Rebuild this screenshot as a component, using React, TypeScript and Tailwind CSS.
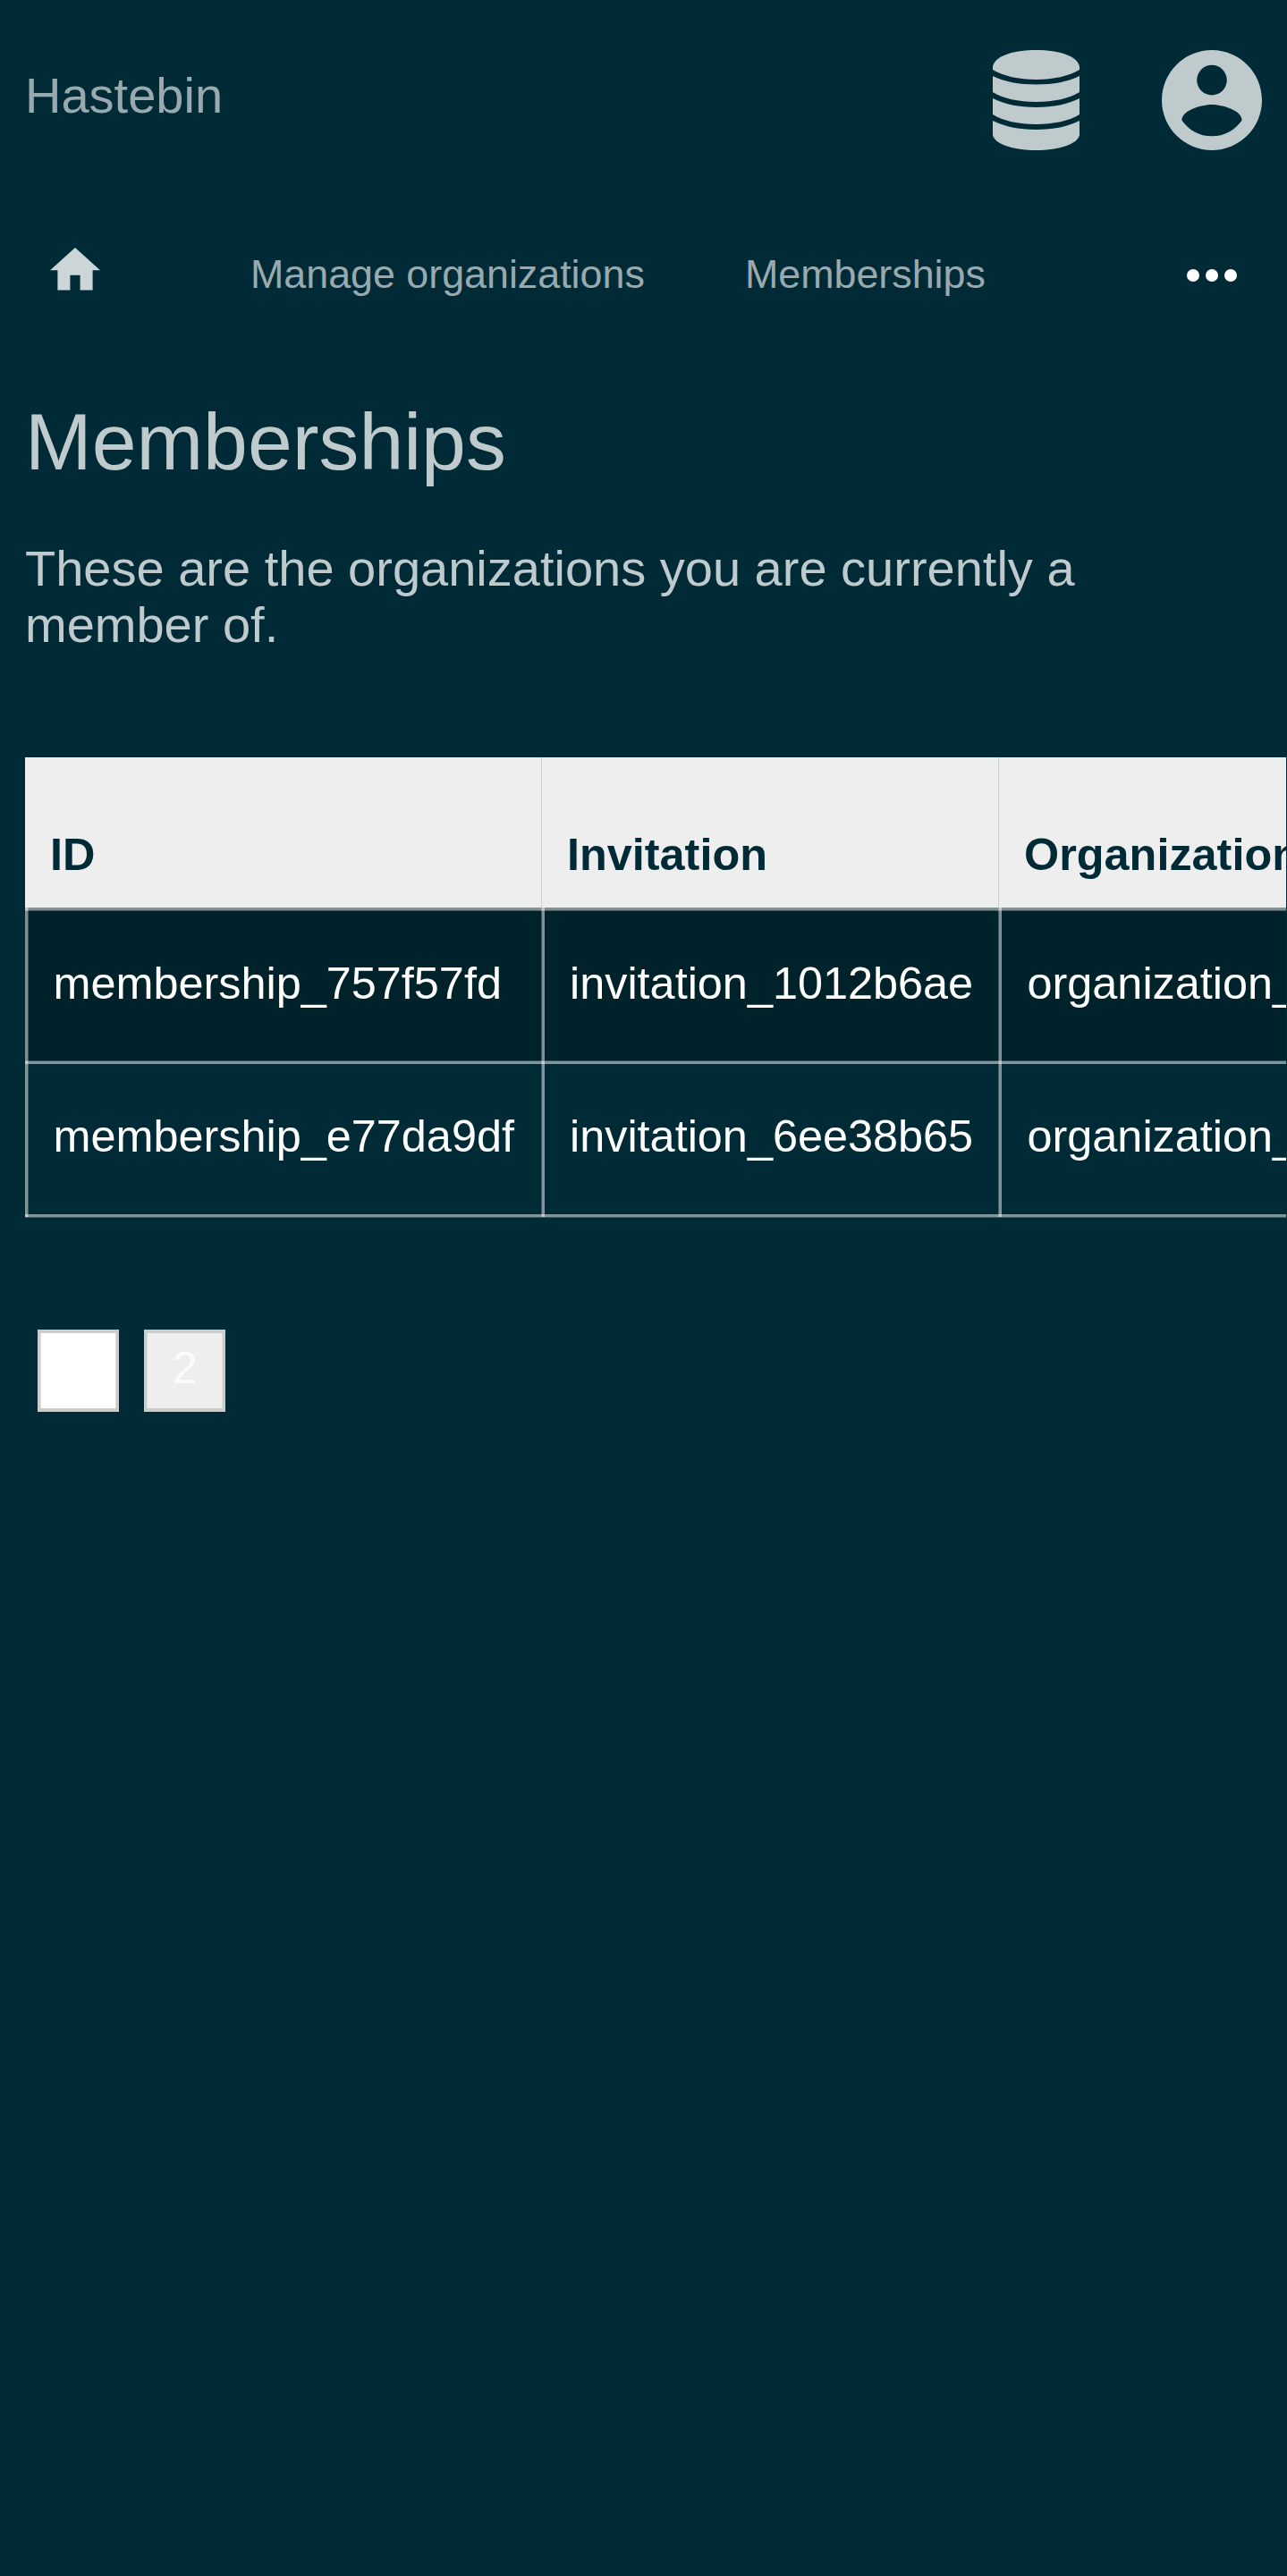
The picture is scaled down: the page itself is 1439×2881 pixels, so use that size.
const inset = {
  firstRow:
    "shadow-[inset_0_3px_rgba(255,255,255,.333),inset_0_4px_rgba(255,255,255,.25),inset_0_-1px_rgba(255,255,255,.25)]",
  lastRow:
    "shadow-[inset_0_3px_rgba(255,255,255,.5),inset_0_-3px_rgba(255,255,255,.5),0_1px_rgba(255,255,255,.25)]",
};

const rows = [
  ["membership_757f57fd", "invitation_1012b6ae", "organization_1b7c"],
  ["membership_e77da9df", "invitation_6ee38b65", "organization_1b7c"],
];

function DatabaseIcon() {
  return (
    <svg viewBox="0 0 97 112" className="h-[112px] w-[97px] fill-[#bfcacd]">
      <path d="M0 18.500C2 7 22 0 48.500 0S95 7 97 18.500V22C85 29 68 33 48.500 33S12 29 0 22Z" />
      <path d="M0 29C13 35.500 29 38.500 48.500 38.500S84 35.500 97 29V47C86 54 68 58 48.500 58S11 54 0 47Z" />
      <path d="M0 54C13 60.500 29 64 48.500 64S84 60.500 97 54V72C86 79 68 83 48.500 83S11 79 0 72Z" />
      <path d="M0 79C13 85.500 29 89 48.500 89S84 85.500 97 79V95C95 105 75 112 48.500 112S2 105 0 95Z" />
    </svg>
  );
}

function AccountIcon() {
  return (
    <svg viewBox="2 2 20 20" className="h-[112px] w-[112px] fill-[#bfcacd]">
      <path d="M12 19.2c-2.5 0-4.71-1.28-6-3.2.03-2 4-3.1 6-3.1s5.97 1.1 6 3.1c-1.29 1.92-3.5 3.2-6 3.2M12 5a3 3 0 0 1 3 3 3 3 0 0 1-3 3 3 3 0 0 1-3-3 3 3 0 0 1 3-3m0-3A10 10 0 0 0 2 12a10 10 0 0 0 10 10 10 10 0 0 0 10-10c0-5.53-4.5-10-10-10z" />
    </svg>
  );
}

export default function App() {
  return (
    <div className="h-[2881px] w-[1439px] overflow-hidden bg-[#002b36] font-['Liberation_Sans',Arial,sans-serif] text-white">
      <header className="flex h-[224px] items-start px-7 pt-14">
        <a className="mt-[19px] flex-1 text-[56px] leading-[64px] text-[#99aaaf]">Hastebin</a>
        <DatabaseIcon />
        <div className="ml-[92px]">
          <AccountIcon />
        </div>
      </header>

      <nav className="flex h-[168px] items-start text-[44.8px] leading-[51px] text-[#99aaaf]">
        <svg viewBox="2 3 20 17" className="ml-14 mt-[53.4px] h-[47.6px] w-14 fill-[#ccd5d7]">
          <path d="M10 20v-6h4v6h5v-8h3L12 3 2 12h3v8z" />
        </svg>
        <a className="ml-[168px] mt-[57px] w-[553px] whitespace-nowrap">Manage organizations</a>
        <a className="mt-[57px] flex-1">Memberships</a>
        <svg viewBox="0 0 56 14" className="mr-14 mt-[77px] h-[14px] w-14 fill-white">
          <circle cx="7" cy="7" r="7" />
          <circle cx="28" cy="7" r="7" />
          <circle cx="49" cy="7" r="7" />
        </svg>
      </nav>

      <main className="pl-7">
        <h1 className="mt-[50px] text-[89.6px] leading-[104px] text-[#bfcacd]">Memberships</h1>
        <p className="mt-[58px] w-[1300px] text-[56px] leading-[63px] text-[#bfcacd]">
          These are the organizations you are currently a member of.
        </p>

        <div className="mt-[117px] w-[1410px] overflow-hidden pb-1 text-[50.4px] leading-[58px]">
          <div className="grid h-[168px] grid-cols-[578px_511px_700px] bg-[#eee] font-bold text-[#002b36]">
            <div className="pl-7 pt-[80px] shadow-[inset_-1px_0_#ccd2d3]">ID</div>
            <div className="pl-7 pt-[80px] shadow-[inset_-1px_0_#ccd2d3]">Invitation</div>
            <div className="pl-7 pt-[80px]">Organization</div>
          </div>
          {rows.map((row, r) => (
            <div
              key={row[0]}
              className={`grid w-[1789px] grid-cols-[578px_511px_700px] ${
                r === 0 ? `h-[172px] bg-[#00222b] ${inset.firstRow}` : `h-[174px] ${inset.lastRow}`
              }`}
            >
              <div
                className={`pl-[31.5px] shadow-[inset_3px_0_rgba(255,255,255,.333),inset_4px_0_rgba(255,255,255,.25),inset_-1px_0_rgba(255,255,255,.25)] ${
                  r === 0 ? "pt-[56px]" : "pt-[55px]"
                }`}
              >
                {row[0]}
              </div>
              <div
                className={`pl-[31px] shadow-[inset_3px_0_rgba(255,255,255,.5),inset_-1px_0_rgba(255,255,255,.25)] ${
                  r === 0 ? "pt-[56px]" : "pt-[55px]"
                }`}
              >
                {row[1]}
              </div>
              <div
                className={`pl-[31.5px] shadow-[inset_3px_0_rgba(255,255,255,.5)] ${
                  r === 0 ? "pt-[56px]" : "pt-[55px]"
                }`}
              >
                {row[2]}
              </div>
            </div>
          ))}
        </div>

        <div className="ml-[14px] mt-[122px] flex gap-7 text-[50.4px] leading-[56px]">
          <button className="h-[92px] w-[91px] border-x-[3px] border-y-4 border-[#ccc] bg-white pb-[7px] shadow-[inset_1px_0_#ddd,inset_-1px_0_#ddd]">1</button>
          <button className="h-[92px] w-[91px] border-x-[3px] border-y-4 border-[#ccc] bg-[#eee] pb-[7px] text-[#fbfbfb] shadow-[inset_1px_0_#ddd,inset_-1px_0_#ddd]">2</button>
        </div>
      </main>
    </div>
  );
}
